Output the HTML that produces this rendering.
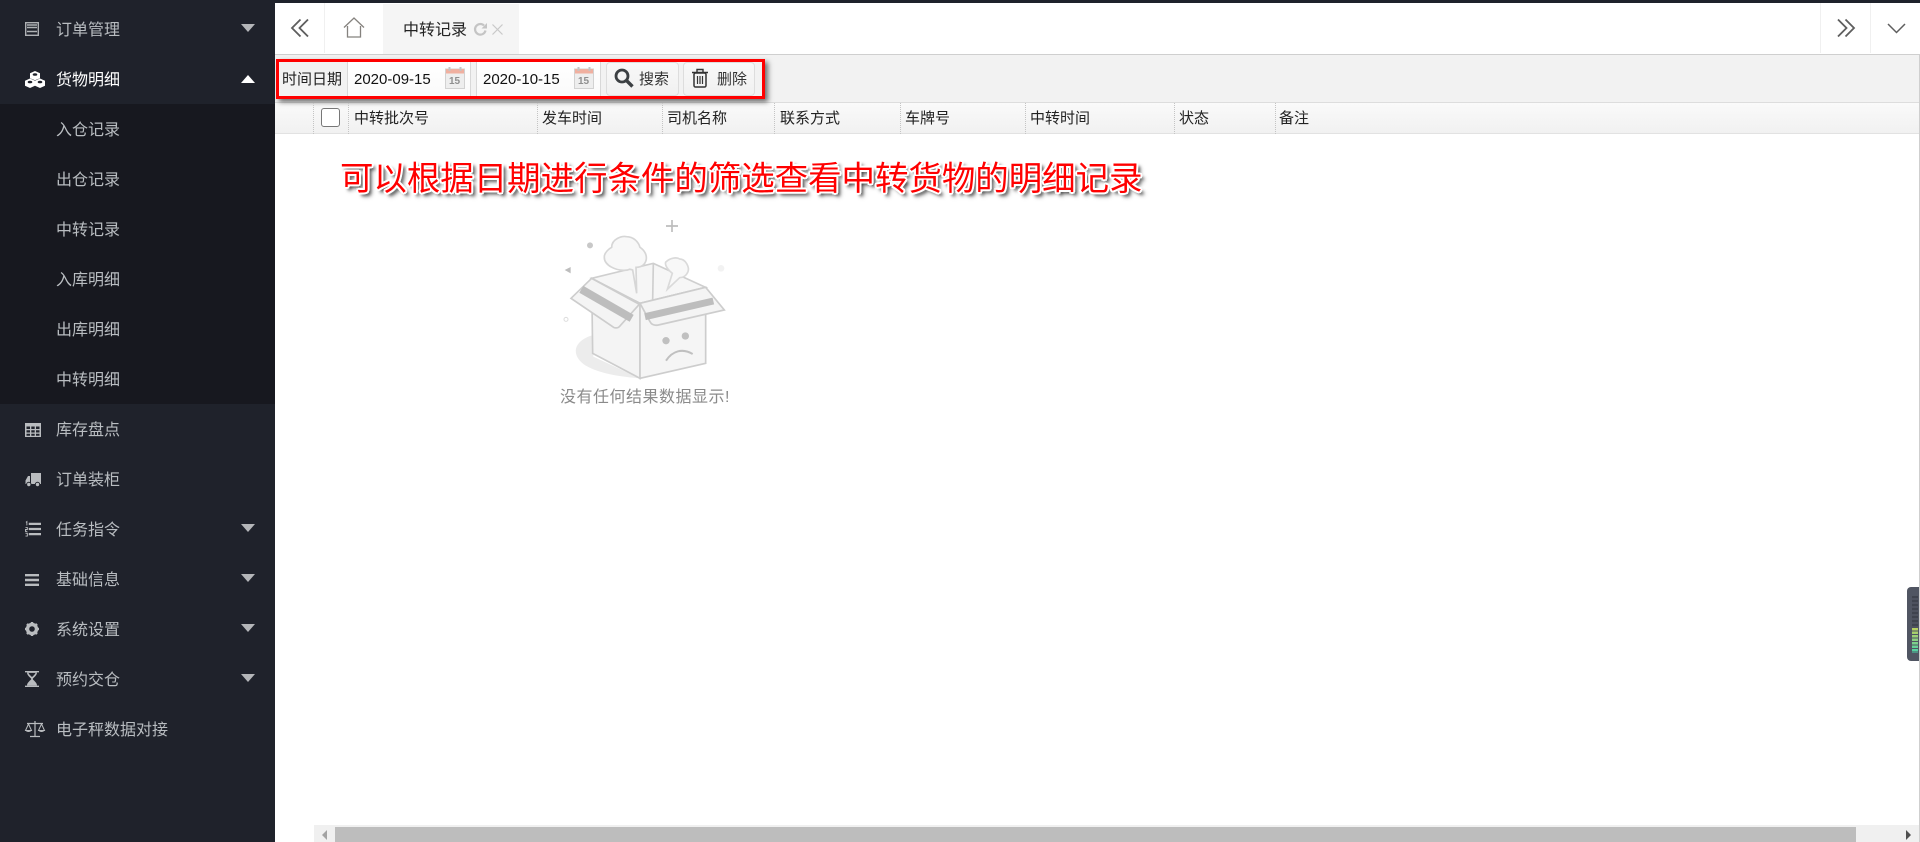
<!DOCTYPE html>
<html lang="zh-CN"><head><meta charset="utf-8"><title>中转记录</title>
<style>
*{box-sizing:border-box}
html,body{margin:0;padding:0;width:1920px;height:842px;overflow:hidden;background:#fff;font-family:"Liberation Sans","Noto Sans CJK SC",sans-serif}
.a{position:absolute}
.t{position:absolute;white-space:nowrap;line-height:22px}
#side{left:0;top:0;width:275px;height:842px;background:#1f222b}
#sub{left:0;top:104px;width:275px;height:300px;background:#17181f}
.m{position:absolute;left:56px;width:200px;font-size:16px;line-height:24px;color:#b9bdc1;white-space:nowrap}
.ic{position:absolute;left:25px;width:16px;height:16px;overflow:visible}
.cd{position:absolute;left:241px;width:0;height:0;border-left:7.5px solid transparent;border-right:7.5px solid transparent;border-top:8px solid #b4b6b9}
.cu{position:absolute;left:241px;width:0;height:0;border-left:7.5px solid transparent;border-right:7.5px solid transparent;border-bottom:8px solid #fff}
.h{position:absolute;top:103px;font-size:15px;color:#222;line-height:32px;white-space:nowrap;height:32px}
.s{position:absolute;top:103px;height:31px;width:0;border-left:1px dotted #c4c4c4}
.inp{position:absolute;top:62px;height:34px;background:linear-gradient(#fff,#fafafa);border-left:1px solid #d8d8d8;border-right:1px solid #d8d8d8;font-size:15px;line-height:35px;color:#111}
.btn{position:absolute;top:62px;height:34px;background:linear-gradient(#f8f8f8,#f1f1f1);border:1px solid #ddd;border-radius:4px;font-size:15px;line-height:33px;color:#333}
</style></head><body>
<div class="a" style="left:0;top:0;width:1920px;height:3px;background:#1e222b"></div>
<div class="a" id="side"></div>
<div class="a" id="sub"></div>

<svg class="ic" style="top:22px;height:14px;width:14px" viewBox="0 0 14 14"><rect x=".7" y=".7" width="12.600" height="12.600" fill="none" stroke="#aeb1b4" stroke-width="1.400"/><path d="M2 3h10M2 5.500h10M2 9.500h10" stroke="#aeb1b4" stroke-width="1.500"/></svg>
<div class="m" style="top:19px">订单管理</div><div class="cd" style="top:24px"></div>

<svg class="ic" style="top:71px;width:20px;height:17px" viewBox="0 0 20 17"><g fill="#fff"><path d="M10 0l5 2.200v5L10 9.300 5 7.200v-5z"/><path d="M5 7.500l5 2.200v5L5 17 0 14.700v-5z"/><path d="M15 7.500l5 2.200v5L15 17l-5-2.300v-5z"/></g><g fill="#1f222b"><ellipse cx="10" cy="3.500" rx="2.300" ry="1.300"/><ellipse cx="5" cy="11" rx="2.300" ry="1.300"/><ellipse cx="15" cy="11" rx="2.300" ry="1.300"/></g></svg>
<div class="m" style="top:69px;color:#fff">货物明细</div><div class="cu" style="top:75px"></div>

<div class="m" style="top:119px">入仓记录</div>
<div class="m" style="top:169px">出仓记录</div>
<div class="m" style="top:219px">中转记录</div>
<div class="m" style="top:269px">入库明细</div>
<div class="m" style="top:319px">出库明细</div>
<div class="m" style="top:369px">中转明细</div>

<svg class="ic" style="top:422px" viewBox="0 0 16 14"><path fill="#b9bcbf" d="M0 0h16v14H0z"/><path fill="#1f222b" d="M1.500 3.500h3.500v2.500H1.500zM6.300 3.500h3.400v2.500H6.300zM11 3.500h3.500v2.500H11zM1.500 7.300h3.500v2.200H1.500zM6.300 7.300h3.400v2.200H6.300zM11 7.300h3.500v2.200H11zM1.500 10.800h3.500v1.900H1.500zM6.300 10.800h3.400v1.900H6.300zM11 10.800h3.500v1.900H11z"/></svg>
<div class="m" style="top:419px">库存盘点</div>

<svg class="ic" style="top:472px" viewBox="0 0 16 14"><path fill="#b9bcbf" d="M6 0h10v11H6zM5 3v8H.5V7.500L3 3z"/><circle cx="3.800" cy="11.500" r="2.200" fill="#b9bcbf" stroke="#1f222b"/><circle cx="12.500" cy="11.500" r="2.200" fill="#b9bcbf" stroke="#1f222b"/></svg>
<div class="m" style="top:469px">订单装柜</div>

<svg class="ic" style="top:521px" viewBox="0 0 17 16"><path d="M4 2.500h13M4 8h13M4 13.500h13" stroke="#b9bcbf" stroke-width="2.400"/><path d="M1 1l1-.8v4M.5 6.500h2v2h-2v2h2M.5 12.500h2v3h-2" stroke="#b9bcbf" stroke-width="1" fill="none"/></svg>
<div class="m" style="top:519px">任务指令</div><div class="cd" style="top:524px"></div>

<svg class="ic" style="top:572px;width:14px" viewBox="0 0 14 12"><path d="M0 1.200h14M0 6h14M0 10.800h14" stroke="#b9bcbf" stroke-width="2.400"/></svg>
<div class="m" style="top:569px">基础信息</div><div class="cd" style="top:574px"></div>

<svg class="ic" style="top:622px;width:14px;height:14px" viewBox="0 0 14 14"><circle cx="7" cy="7" r="4.500" fill="none" stroke="#b9bcbf" stroke-width="3.400"/><path d="M7 0v3M7 11v3M0 7h3M11 7h3M2 2l2 2M10 10l2 2M12 2l-2 2M4 10l-2 2" stroke="#b9bcbf" stroke-width="2.400"/></svg>
<div class="m" style="top:619px">系统设置</div><div class="cd" style="top:624px"></div>

<svg class="ic" style="top:671px;width:14px" viewBox="0 0 14 16"><path d="M0 .7h14M0 15.300h14" stroke="#b9bcbf" stroke-width="1.400"/><path d="M2 1.500h10c0 3-3.500 5-4.300 6.500.8 1.500 4.300 3.500 4.300 6.500H2C2 11.500 5.500 9.500 6.300 8 5.500 6.500 2 4.500 2 1.500z" fill="#b9bcbf"/><path d="M3.500 2h7c-.5 1.500-2 2.500-3.500 4-1.500-1.500-3-2.500-3.500-4z" fill="#1f222b"/></svg>
<div class="m" style="top:669px">预约交仓</div><div class="cd" style="top:674px"></div>

<svg class="ic" style="top:721px;width:20px" viewBox="0 0 20 16"><path d="M10 0v15M5 15.500h10M2 2.500h16" stroke="#b9bcbf" stroke-width="1.200" fill="none"/><path d="M3.500 3L.5 9.500h6zM16.500 3l-3 6.500h6z" stroke="#b9bcbf" fill="none"/><path d="M.5 9.500c1 2 5 2 6 0zM13.500 9.500c1 2 5 2 6 0z" fill="#b9bcbf"/></svg>
<div class="m" style="top:719px">电子秤数据对接</div>

<!-- tab bar -->
<div class="a" style="left:275px;top:3px;width:1645px;height:52px;background:#fff;border-bottom:1px solid #cfcfcf"></div>
<div class="a" style="left:324px;top:3px;width:1px;height:50px;background:#f0f0f0"></div>
<div class="a" style="left:1820px;top:3px;width:1px;height:50px;background:#f0f0f0"></div>
<div class="a" style="left:1870px;top:3px;width:1px;height:50px;background:#f0f0f0"></div>
<svg class="a" style="left:290px;top:18px" width="20" height="20" viewBox="0 0 20 20"><path d="M10.500 1.500L2 10l8.500 8.500M18 1.500L9.500 10l8.500 8.500" fill="none" stroke="#5e5e5e" stroke-width="1.800"/></svg>
<svg class="a" style="left:343px;top:17px" width="22" height="21" viewBox="0 0 22 21"><path d="M1 10.500L11 1l10 9.500M4.500 9v11h13V9" fill="none" stroke="#85827e" stroke-width="1.300"/></svg>
<div class="a" style="left:383px;top:4px;width:136px;height:50px;background:#f5f5f5"></div>
<div class="t" style="left:403px;top:20px;font-size:16px;color:#222">中转记录</div>
<svg class="a" style="left:473px;top:22px" width="15" height="15" viewBox="0 0 15 15"><path d="M12.500 8.500a5.300 5.300 0 1 1-1.500-5" fill="none" stroke="#c4c4c4" stroke-width="2.200"/><path d="M14 1v5.500H8.500z" fill="#c4c4c4"/></svg>
<svg class="a" style="left:492px;top:24px" width="11" height="11" viewBox="0 0 11 11"><path d="M.5.500l10 10M10.500.500l-10 10" stroke="#c8c8c8" stroke-width="1.200"/></svg>
<svg class="a" style="left:1836px;top:18px" width="20" height="20" viewBox="0 0 20 20"><path d="M2 1.500l8.500 8.500L2 18.500M9.500 1.500L18 10l-8.500 8.500" fill="none" stroke="#5e5e5e" stroke-width="1.800"/></svg>
<svg class="a" style="left:1887px;top:23px" width="19" height="11" viewBox="0 0 19 11"><path d="M1 1l8.500 8.500L18 1" fill="none" stroke="#5e5e5e" stroke-width="1.500"/></svg>

<!-- toolbar -->
<div class="a" style="left:275px;top:55px;width:1645px;height:47px;background:#f2f2f2"></div>
<div class="a" style="left:275px;top:102px;width:1645px;height:32px;background:linear-gradient(#fafafa,#f1f1f1);border-top:1px solid #ddd;border-bottom:1px solid #e2e2e2"></div>
<div class="a" style="left:1919px;top:55px;width:1px;height:787px;background:#cfcfcf"></div>

<div class="t" style="left:282px;top:69px;font-size:15px;color:#222">时间日期</div>
<div class="inp" style="left:347px;width:124px;padding-left:6px">2020-09-15</div>
<div class="inp" style="left:476px;width:125px;padding-left:6px">2020-10-15</div>
<svg class="a" style="left:445px;top:67px" width="20" height="22" viewBox="0 0 20 22"><rect x=".5" y="2" width="19" height="19.500" fill="#eeeeee" stroke="#d2d2d2"/><path d="M1 2h18v4.500H1z" fill="#f0b0a0"/><path d="M4.500 0v4M15.500 0v4" stroke="#c4c4c4" stroke-width="2"/><text x="4" y="17" font-size="10" font-weight="700" fill="#8f8f8f" font-family="Liberation Sans">15</text></svg>
<svg class="a" style="left:574px;top:67px" width="20" height="22" viewBox="0 0 20 22"><rect x=".5" y="2" width="19" height="19.500" fill="#eeeeee" stroke="#d2d2d2"/><path d="M1 2h18v4.500H1z" fill="#f0b0a0"/><path d="M4.500 0v4M15.500 0v4" stroke="#c4c4c4" stroke-width="2"/><text x="4" y="17" font-size="10" font-weight="700" fill="#8f8f8f" font-family="Liberation Sans">15</text></svg>

<div class="btn" style="left:606px;width:73px"><span class="a" style="left:32px;top:0">搜索</span></div>
<svg class="a" style="left:614px;top:68px" width="20" height="20" viewBox="0 0 20 20"><circle cx="8" cy="8" r="6" fill="none" stroke="#3c4043" stroke-width="2.800"/><path d="M12.500 12.500l6 6" stroke="#3c4043" stroke-width="3.400"/></svg>
<div class="btn" style="left:683px;width:72px"><span class="a" style="left:33px;top:0">删除</span></div>
<svg class="a" style="left:691px;top:68px" width="18" height="20" viewBox="0 0 18 20"><path d="M1 4.500h16M6 4V1.500h6V4" fill="none" stroke="#333" stroke-width="1.400"/><rect x="3" y="5" width="12" height="14" rx="1.500" fill="none" stroke="#333" stroke-width="1.500"/><path d="M6.500 8v8M9 8v8M11.500 8v8" stroke="#333" stroke-width="1.200"/></svg>

<div class="a" style="left:276px;top:59px;width:489px;height:40px;border:3px solid #f00;box-shadow:3px 3px 5px rgba(0,0,0,.55)"></div>

<!-- header -->
<div class="s" style="left:313px"></div><div class="s" style="left:348px"></div><div class="s" style="left:537px"></div><div class="s" style="left:662px"></div><div class="s" style="left:774px"></div><div class="s" style="left:900px"></div><div class="s" style="left:1025px"></div><div class="s" style="left:1174px"></div><div class="s" style="left:1275px"></div>
<div class="a" style="left:321px;top:108px;width:19px;height:19px;background:#fff;border:1px solid #777;border-radius:3px"></div>
<div class="h" style="left:354px">中转批次号</div>
<div class="h" style="left:542px">发车时间</div>
<div class="h" style="left:667px">司机名称</div>
<div class="h" style="left:780px">联系方式</div>
<div class="h" style="left:905px">车牌号</div>
<div class="h" style="left:1030px">中转时间</div>
<div class="h" style="left:1179px">状态</div>
<div class="h" style="left:1279px">备注</div>

<!-- annotation -->
<div class="t" style="left:340px;top:160px;font-size:33.450px;line-height:40px;color:#f00;font-family:'Liberation Sans','Noto Sans CJK SC',sans-serif;text-shadow:-2px 0 0 #fff,2px 0 0 #fff,0 -2px 0 #fff,0 2px 0 #fff,-1.500px -1.500px 0 #fff,1.500px -1.500px 0 #fff,-1.500px 1.500px 0 #fff,1.500px 1.500px 0 #fff,3px 3px 3px rgba(0,0,0,.75),4px 4px 5px rgba(0,0,0,.4)">可以根据日期进行条件的筛选查看中转货物的明细记录</div>

<!-- empty illustration -->
<svg class="a" style="left:540px;top:210px" width="220" height="180" viewBox="0 0 660 540">
<path d="M160 375C105 390 90 430 130 462c40 28 110 38 170 43L160 440z" fill="#ececec"/>
<path d="M155 205L340 160l157 72-197 48z" fill="#f6f6f6" stroke="#cfcfcf" stroke-width="5"/>
<path d="M340 160l-2 110" stroke="#cfcfcf" stroke-width="5"/>
<path d="M290 250L278 180c-10-3-8-3-15 0-35 5-72-15-70-40 0-12 15-25 22-28 0-25 30-35 45-32 20 0 35 15 40 32 15 10 22 25 18 40-5 15-18 20-30 20z" fill="#f8f8f8" stroke="#d6d6d6" stroke-width="5"/>
<path d="M382 238l15-48c-25-20-22-35-18-35 10-10 30-15 40-8 18 0 30 25 25 38-5 12-15 18-25 18z" fill="#f8f8f8" stroke="#dadada" stroke-width="5"/>
<path d="M155 205L300 280v225l-142-75z" fill="#f4f4f4" stroke="#cdcdcd" stroke-width="5"/>
<path d="M300 280l197-48v228l-197 45z" fill="#f5f5f5" stroke="#cdcdcd" stroke-width="5"/>
<path d="M155 205L93 265l125 85c5 5 15 5 20 0l60-67z" fill="#f4f4f4" stroke="#cdcdcd" stroke-width="5"/>
<path d="M300 280l30 55c5 10 15 12 25 10l198-45-56-68z" fill="#f4f4f4" stroke="#cdcdcd" stroke-width="5"/>
<path d="M124 238L275 325" stroke="#bdbdbd" stroke-width="24"/>
<path d="M315 320L520 273" stroke="#bdbdbd" stroke-width="21"/>
<circle cx="378" cy="392" r="11" fill="#c0c0c0"/><circle cx="436" cy="378" r="11" fill="#c0c0c0"/>
<path d="M378 452c20-30 50-38 80-20" fill="none" stroke="#c0c0c0" stroke-width="6"/>
<path d="M396 30v36M378 48h36" stroke="#bdbdbd" stroke-width="5"/>
<circle cx="150" cy="106" r="9" fill="#c8c8c8"/>
<path d="M74 180l18-9v19z" fill="#bdbdbd"/>
<circle cx="78" cy="328" r="6" fill="#fff" stroke="#ddd" stroke-width="3"/>
<circle cx="543" cy="175" r="10" fill="#f2f2f2"/>
</svg>
<div class="t" style="left:560px;top:387px;font-size:16px;letter-spacing:.5px;color:#8a8a8a">没有任何结果数据显示!</div>

<!-- scrollbar -->
<div class="a" style="left:314px;top:825px;width:1605px;height:17px;background:#f0f0f0"></div>
<div class="a" style="left:335px;top:827px;width:1521px;height:15px;background:#bdbdbd"></div>
<div class="a" style="left:322px;top:830px;width:0;height:0;border-top:5px solid transparent;border-bottom:5px solid transparent;border-right:5px solid #a3a3a3"></div>
<div class="a" style="left:1906px;top:830px;width:0;height:0;border-top:5px solid transparent;border-bottom:5px solid transparent;border-left:5px solid #505050"></div>

<!-- side widget -->
<div class="a" style="left:1907px;top:587px;width:12px;height:74px;background:#505562;border-radius:4px 0 0 4px"></div>
<div class="a" style="left:1912px;top:596px;width:6px;height:32px;background:repeating-linear-gradient(#3f434e 0,#3f434e 2px,#4d515e 2px,#4d515e 4px)"></div>
<div class="a" style="left:1912px;top:628px;width:6px;height:25px;background:repeating-linear-gradient(transparent 0,transparent 2.500px,#505562 2.500px,#505562 3.500px),linear-gradient(#b8cf5e,#8fd080 45%,#48d0a8)"></div>
</body></html>
